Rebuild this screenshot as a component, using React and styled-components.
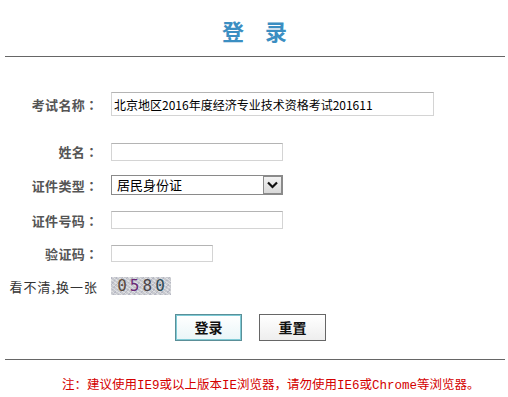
import React from "react";
import styled, { createGlobalStyle } from "styled-components";

const Global = createGlobalStyle`
  html, body { margin: 0; padding: 0; background: #fff; }
  body { font-family: "Noto Sans CJK SC", "Liberation Sans", sans-serif; }
`;

const Page = styled.div`
  width: 508px;
  height: 397px;
  display: flex;
  flex-direction: column;
`;

const Header = styled.div`
  height: 56px;
  display: flex;
  align-items: center;
  justify-content: center;
`;

const Title = styled.h1`
  margin: 4px 0 0 0;
  display: flex;
  gap: 21px;
  font-size: 22px;
  line-height: 24px;
  font-weight: 700;
  color: #3b8ec2;
  padding-left: 1px;
`;

const Rule = styled.hr`
  margin: ${(p) => p.$mt || 0}px 3px 0 5px;
  border: 0;
  height: 1px;
  background: #666;
`;

const Form = styled.form`
  display: flex;
  flex-direction: column;
  margin: 0;
`;

const Row = styled.div`
  display: grid;
  grid-template-columns: 98px auto;
  column-gap: 13px;
  align-items: center;
  height: ${(p) => p.$h}px;
  margin-top: ${(p) => p.$mt || 0}px;
`;

const Label = styled.label`
  justify-self: end;
  font-size: 13px;
  font-weight: ${(p) => (p.$plain ? 400 : 700)};
  color: ${(p) => (p.$plain ? "#333" : "#555")};
  letter-spacing: ${(p) => (p.$plain ? "1px" : "0.3px")};
  white-space: nowrap;
`;

const Colon = styled.span`
  font-family: "Noto Sans CJK JP", "Noto Sans CJK SC", sans-serif;
  letter-spacing: 0;
`;

const TextInput = styled.input`
  display: block;
  box-sizing: border-box;
  width: ${(p) => p.$w}px;
  height: ${(p) => p.$hh}px;
  border: 1px solid #d4d4d4;
  border-top-color: #b4b4b4;
  padding: 0 2px;
  font-family: "Noto Sans CJK SC", sans-serif;
  font-size: 12px;
  color: #000;
  background: #fff;
  outline: none;
`;

const SelectWrap = styled.div`
  position: relative;
  width: 172px;
  height: 20px;
`;

const Select = styled.select`
  display: block;
  box-sizing: border-box;
  width: 172px;
  height: 20px;
  border: 1px solid #8a8a8a;
  border-radius: 0;
  padding: 0 0 0 5px;
  appearance: none;
  -webkit-appearance: none;
  background: #fff;
  font-family: "Noto Sans CJK SC", sans-serif;
  font-size: 13px;
  line-height: 18px;
  color: #000;
  outline: none;
`;

const ArrowBox = styled.span`
  position: absolute;
  right: 1px;
  top: 1px;
  width: 19px;
  height: 18px;
  box-sizing: border-box;
  border: 1px solid #8a8a8a;
  background: linear-gradient(#f2f2f2, #d9d9d9);
  display: flex;
  align-items: center;
  justify-content: center;
  pointer-events: none;
`;

const Captcha = styled.span`
  width: 60px;
  height: 18px;
  display: flex;
  align-items: center;
  justify-content: center;
  gap: 3px;
  background:
    repeating-linear-gradient(35deg, rgba(255,255,255,0.4) 0 1px, transparent 1px 3px),
    repeating-linear-gradient(-50deg, rgba(150,150,175,0.35) 0 1px, transparent 1px 4px),
    #c8cacf;
  font-family: "DejaVu Sans Mono", monospace;
  font-size: 16px;
  line-height: 18px;
`;

const Digit = styled.span`
  color: ${(p) => p.$c};
`;

const Buttons = styled.div`
  display: flex;
  justify-content: center;
  gap: 17px;
  padding-right: 7px;
  height: 34px;
  align-items: center;
  margin-top: 8px;
`;

const Button = styled.button`
  box-sizing: border-box;
  width: 67px;
  height: 27px;
  padding: 0;
  font-family: "Noto Sans CJK SC", sans-serif;
  font-size: 14px;
  font-weight: 700;
  color: #111;
  cursor: pointer;
  border: ${(p) => (p.$primary ? "2px solid #7fcbd6" : "1px solid #666")};
  outline: ${(p) => (p.$primary ? "1px solid #5a8f98" : "none")};
  outline-offset: -1px;
  background: ${(p) =>
    p.$primary
      ? "linear-gradient(#ffffff, #eaf6f8)"
      : "linear-gradient(#ffffff, #eeeeee)"};
`;

const Note = styled.p`
  margin: 16px 0 0 0;
  padding-left: 62px;
  font-family: "Liberation Mono", "Noto Sans CJK SC", monospace;
  font-size: 12.5px;
  line-height: 20px;
  color: #d40000;
  white-space: nowrap;
`;

export default function App() {
  return (
    <Page>
      <Global />
      <Header>
        <Title>
          <span>登</span>
          <span>录</span>
        </Title>
      </Header>
      <Rule />
      <Form onSubmit={(e) => e.preventDefault()}>
        <Row $h={34} $mt={30}>
          <Label>考试名称<Colon>：</Colon></Label>
          <TextInput $w={323} $hh={24} defaultValue="北京地区2016年度经济专业技术资格考试201611" />
        </Row>
        <Row $h={33} $mt={14}>
          <Label>姓名<Colon>：</Colon></Label>
          <TextInput $w={172} $hh={18} />
        </Row>
        <Row $h={34}>
          <Label>证件类型<Colon>：</Colon></Label>
          <SelectWrap>
            <Select defaultValue="id">
              <option value="id">居民身份证</option>
            </Select>
            <ArrowBox>
              <svg width="11" height="8" viewBox="0 0 11 8">
                <path d="M1 1.5 L5.5 6 L10 1.5" fill="none" stroke="#111" strokeWidth="2.2" />
              </svg>
            </ArrowBox>
          </SelectWrap>
        </Row>
        <Row $h={34} $mt={1}>
          <Label>证件号码<Colon>：</Colon></Label>
          <TextInput $w={172} $hh={18} />
        </Row>
        <Row $h={33}>
          <Label>验证码<Colon>：</Colon></Label>
          <TextInput $w={102} $hh={17} />
        </Row>
        <Row $h={32}>
          <Label $plain>看不清,换一张</Label>
          <Captcha>
            <Digit $c="#5a4a3e">0</Digit>
            <Digit $c="#6a2a78">5</Digit>
            <Digit $c="#4a4448">8</Digit>
            <Digit $c="#2e4c58">0</Digit>
          </Captcha>
        </Row>
        <Buttons>
          <Button type="submit" $primary>登录</Button>
          <Button type="reset">重置</Button>
        </Buttons>
      </Form>
      <Rule $mt={15} />
      <Note>注：建议使用IE9或以上版本IE浏览器，请勿使用IE6或Chrome等浏览器。</Note>
    </Page>
  );
}
